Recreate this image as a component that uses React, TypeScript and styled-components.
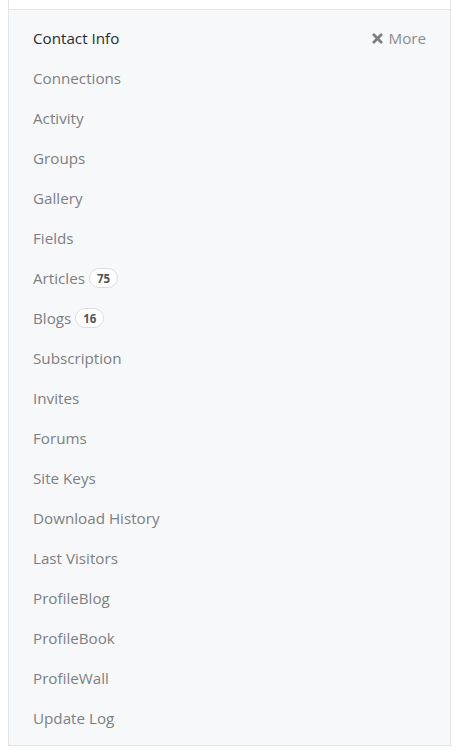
import React from 'react';
import styled, { createGlobalStyle } from 'styled-components';

const GlobalStyle = createGlobalStyle`
  body {
    margin: 0;
    padding: 0 8px;
    background: #ffffff;
    font-family: 'Open Sans', 'Liberation Sans', sans-serif;
  }
`;

const Wrap = styled.div`
  width: 443px;
  box-sizing: border-box;
  border-left: 1px solid #e3e4e6;
  border-right: 1px solid #e3e4e6;
  border-bottom: 1px solid #e3e4e6;
`;

const TopStrip = styled.div`
  height: 9px;
  background: #ffffff;
  border-bottom: 1px solid #e3e4e6;
`;

const Panel = styled.div`
  background: #f7f8fa;
  padding: 8px 24px 7px 24px;
  display: flex;
  flex-direction: column;
`;

const Row = styled.div`
  height: 40px;
  display: flex;
  align-items: center;
  justify-content: space-between;
`;

const Item = styled.a<{ $active?: boolean }>`
  display: flex;
  align-items: center;
  gap: 4px;
  font-size: 15.2px;
  color: ${(p) => (p.$active ? '#2b2b2b' : '#7d7f82')};
  text-decoration: none;
  cursor: pointer;
`;

const Badge = styled.span`
  display: inline-flex;
  align-items: center;
  justify-content: center;
  height: 20px;
  min-width: 20px;
  padding: 0 7px;
  box-sizing: border-box;
  border: 1px solid #dcdde0;
  border-radius: 10px;
  background: #ffffff;
  font-size: 11.5px;
  font-weight: 700;
  color: #555;
`;

const More = styled.button`
  display: flex;
  align-items: center;
  gap: 5px;
  border: none;
  background: none;
  padding: 0;
  font-family: inherit;
  font-size: 15.2px;
  color: #8a8c8f;
  cursor: pointer;
`;

const items: { label: string; count?: number }[] = [
  { label: 'Connections' },
  { label: 'Activity' },
  { label: 'Groups' },
  { label: 'Gallery' },
  { label: 'Fields' },
  { label: 'Articles', count: 75 },
  { label: 'Blogs', count: 16 },
  { label: 'Subscription' },
  { label: 'Invites' },
  { label: 'Forums' },
  { label: 'Site Keys' },
  { label: 'Download History' },
  { label: 'Last Visitors' },
  { label: 'ProfileBlog' },
  { label: 'ProfileBook' },
  { label: 'ProfileWall' },
  { label: 'Update Log' },
];

const App = () => {
  return (
    <>
      <GlobalStyle />
      <Wrap>
        <TopStrip />
        <Panel>
          <Row>
            <Item $active>Contact Info</Item>
            <More>
              <svg width="11" height="11" viewBox="0 0 12 12">
                <path d="M2 2 L10 10 M10 2 L2 10" stroke="#7d7f82" strokeWidth="3" strokeLinecap="round" />
              </svg>
              More
            </More>
          </Row>
          {items.map((it) => (
            <Row key={it.label}>
              <Item>
                {it.label}
                {it.count !== undefined && <Badge>{it.count}</Badge>}
              </Item>
            </Row>
          ))}
        </Panel>
      </Wrap>
    </>
  );
};

export default App;
